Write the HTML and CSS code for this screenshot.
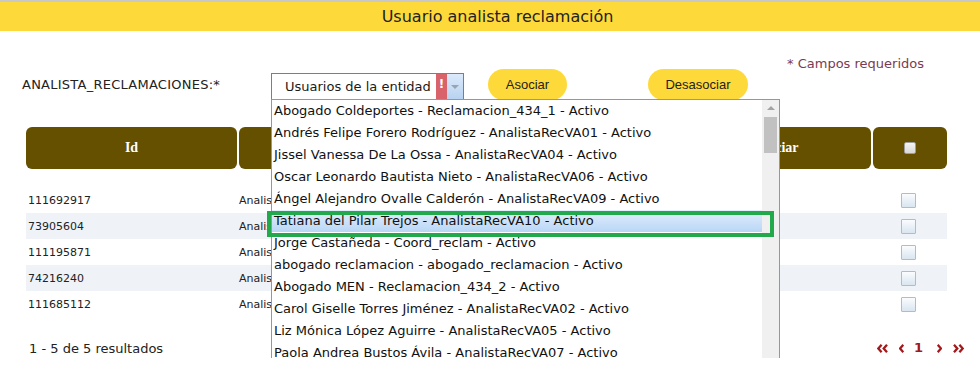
FILE: index.html
```html
<!DOCTYPE html>
<html lang="es">
<head>
<meta charset="utf-8">
<title>Usuario analista reclamación</title>
<link rel="stylesheet" href="styles.css">
</head>
<body>
<header class="topbar">
  <h1 class="title">Usuario analista reclamación</h1>
</header>

<main class="content">
  <div class="required">* Campos requeridos</div>

  <div class="form-row">
    <label class="field-label">ANALISTA_RECLAMACIONES:*</label>
    <div class="select-wrap">
      <div class="select">
        <span class="select-text">Usuarios de la entidad</span>
        <span class="select-error">!</span>
        <span class="select-arrow"><span class="tri-down"></span></span>
      </div>
      <div class="dropdown">
        <ul class="options">
          <li>Abogado Coldeportes - Reclamacion_434_1 - Activo</li>
          <li>Andrés Felipe Forero Rodríguez - AnalistaRecVA01 - Activo</li>
          <li>Jissel Vanessa De La Ossa - AnalistaRecVA04 - Activo</li>
          <li>Oscar Leonardo Bautista Nieto - AnalistaRecVA06 - Activo</li>
          <li>Ángel Alejandro Ovalle Calderón - AnalistaRecVA09 - Activo</li>
          <li class="selected">Tatiana del Pilar Trejos - AnalistaRecVA10 - Activo</li>
          <li>Jorge Castañeda - Coord_reclam - Activo</li>
          <li>abogado reclamacion - abogado_reclamacion - Activo</li>
          <li>Abogado MEN - Reclamacion_434_2 - Activo</li>
          <li>Carol Giselle Torres Jiménez - AnalistaRecVA02 - Activo</li>
          <li>Liz Mónica López Aguirre - AnalistaRecVA05 - Activo</li>
          <li>Paola Andrea Bustos Ávila - AnalistaRecVA07 - Activo</li>
        </ul>
        <div class="scrollbar">
          <span class="tri-up"></span>
          <span class="thumb"></span>
        </div>
      </div>
      <div class="mark-box"></div>
    </div>
    <button class="btn btn-asociar" type="button">Asociar</button>
    <button class="btn btn-desasociar" type="button">Desasociar</button>
  </div>

  <div class="table">
    <div class="thead">
      <div class="th">Id</div>
      <div class="th">Usuario</div>
      <div class="th">Nombre</div>
      <div class="th">Desasociar</div>
      <div class="th"><span class="head-check"></span></div>
    </div>
    <div class="tbody">
      <div class="tr">
        <div class="td">111692917</div>
        <div class="td">AnalistaRecVA01</div>
        <div class="td"></div>
        <div class="td"></div>
        <div class="td td-check"><span class="check"></span></div>
      </div>
      <div class="tr alt">
        <div class="td">73905604</div>
        <div class="td">AnalistaRecVA04</div>
        <div class="td"></div>
        <div class="td"></div>
        <div class="td td-check"><span class="check"></span></div>
      </div>
      <div class="tr">
        <div class="td">111195871</div>
        <div class="td">AnalistaRecVA06</div>
        <div class="td"></div>
        <div class="td"></div>
        <div class="td td-check"><span class="check"></span></div>
      </div>
      <div class="tr alt">
        <div class="td">74216240</div>
        <div class="td">AnalistaRecVA09</div>
        <div class="td"></div>
        <div class="td"></div>
        <div class="td td-check"><span class="check"></span></div>
      </div>
      <div class="tr">
        <div class="td">111685112</div>
        <div class="td">AnalistaRecVA02</div>
        <div class="td"></div>
        <div class="td"></div>
        <div class="td td-check"><span class="check"></span></div>
      </div>
    </div>
  </div>

  <div class="footer">
    <span class="results">1 - 5 de 5 resultados</span>
    <nav class="pager">
      <svg class="chev-double" width="11" height="9" viewBox="0 0 11 9"><polyline points="4.6,0.8 1.3,4.5 4.6,8.2"/><polyline points="10,0.8 6.7,4.5 10,8.2"/></svg>
      <svg class="chev-single prev" width="5" height="9" viewBox="0 0 5 9"><polyline points="4.3,0.8 1,4.5 4.3,8.2"/></svg>
      <span class="page-num">1</span>
      <svg class="chev-single next" width="5" height="9" viewBox="0 0 5 9"><polyline points="0.7,0.8 4,4.5 0.7,8.2"/></svg>
      <svg class="chev-double last" width="11" height="9" viewBox="0 0 11 9"><polyline points="1,0.8 4.3,4.5 1,8.2"/><polyline points="6.4,0.8 9.7,4.5 6.4,8.2"/></svg>
    </nav>
  </div>
</main>
</body>
</html>
```

FILE: styles.css
```css
html, body {
  margin: 0;
  padding: 0;
  overflow: hidden;
  background: #ffffff;
}

body {
  font-family: "DejaVu Sans", Verdana, sans-serif;
  font-size: 13px;
  color: #1f1f1f;
}

.topbar {
  border-top: 2px solid #c8c8c8;
  background: #fed93a;
  height: 29px;
}

.title {
  margin: 0;
  padding-left: 15px;
  font-size: 16px;
  font-weight: normal;
  line-height: 29px;
  text-align: center;
  color: #222;
}

.required {
  margin-top: 26px;
  padding-right: 56px;
  line-height: 14px;
  text-align: right;
  color: #7b3b50;
}

.form-row {
  display: flex;
  align-items: center;
  height: 31px;
  margin-top: -2px;
  padding-left: 22px;
}

.field-label {
  width: 249px;
  flex: none;
  line-height: 16px;
  letter-spacing: 0.25px;
  color: #222;
}

.select-wrap {
  position: relative;
  align-self: flex-start;
  margin-top: 4px;
  width: 193px;
  height: 27px;
  flex: none;
}

.select {
  box-sizing: border-box;
  display: flex;
  height: 27px;
  border: 1px solid #d9575b;
  background: #fff;
}

.select-text {
  flex: 1;
  padding-left: 13px;
  line-height: 25px;
  color: #1a1a1a;
  white-space: nowrap;
}

.select-error {
  width: 11px;
  background: #d9636a;
  color: #fff;
  font-weight: bold;
  font-size: 12px;
  line-height: 21px;
  text-align: center;
}

.select-arrow {
  width: 16px;
  display: flex;
  align-items: center;
  justify-content: center;
  background: linear-gradient(#dceafb, #b8d2f1);
}

.tri-down {
  width: 0;
  height: 0;
  border-left: 4px solid transparent;
  border-right: 4px solid transparent;
  border-top: 4px solid #9aa4ae;
}

.dropdown {
  position: absolute;
  z-index: 10;
  left: 0;
  top: 26px;
  box-sizing: border-box;
  width: 509px;
  height: 268px;
  border: 1px solid #7f9db9;
  background: #fff;
  display: flex;
  overflow: hidden;
}

.options {
  flex: 1;
  list-style: none;
  margin: 0;
  padding: 0;
}

.options li {
  height: 22px;
  line-height: 22px;
  padding-left: 2px;
  white-space: nowrap;
  color: #111;
}

.options li.selected {
  background: linear-gradient(#e3effc, #b9d6f6);
}

.scrollbar {
  width: 17px;
  flex: none;
  background: #f0f0f0;
  display: flex;
  flex-direction: column;
  align-items: center;
}

.tri-up {
  margin-top: 6px;
  width: 0;
  height: 0;
  border-left: 4px solid transparent;
  border-right: 4px solid transparent;
  border-bottom: 4px solid #a3a3a3;
}

.thumb {
  margin-top: 7px;
  width: 13px;
  height: 36px;
  background: #c1c1c1;
}

.mark-box {
  position: absolute;
  z-index: 11;
  left: -4px;
  top: 138px;
  box-sizing: border-box;
  width: 507px;
  height: 26px;
  border: 4px solid #22a94b;
}

.btn {
  flex: none;
  height: 31px;
  border: none;
  border-radius: 16px;
  background: #fed93a;
  font-family: "Liberation Sans", Arial, sans-serif;
  font-size: 13px;
  color: #222;
  padding: 0;
}

.btn-asociar {
  margin-left: 24px;
  width: 79px;
}

.btn-desasociar {
  margin-left: 81px;
  width: 100px;
}

.table {
  margin: 27px 33px 0 26px;
}

.thead {
  display: grid;
  grid-template-columns: 211px 1fr 1fr 1fr 74px;
  column-gap: 2px;
  height: 42px;
}

.th {
  background: #655000;
  border-radius: 6px;
  color: #fff;
  font-family: "Liberation Serif", "Times New Roman", serif;
  font-weight: bold;
  font-size: 14px;
  display: flex;
  align-items: center;
  justify-content: center;
}

.head-check {
  box-sizing: border-box;
  width: 12px;
  height: 12px;
  border: 1px solid #9d9d9d;
  border-radius: 2px;
  background: linear-gradient(#f4f4f4, #d9d9d9);
}

.tbody {
  margin-top: 18px;
}

.tr {
  display: grid;
  grid-template-columns: 211px 1fr 1fr 1fr 74px;
  height: 26px;
}

.tr.alt {
  background: #eff3f8;
}

.td {
  display: flex;
  align-items: center;
  padding-left: 2px;
  font-size: 11px;
  color: #222;
  white-space: nowrap;
  overflow: hidden;
}

.td-check {
  justify-content: center;
  padding-left: 0;
  padding-right: 3px;
}

.check {
  box-sizing: border-box;
  width: 15px;
  height: 15px;
  border: 1px solid #b7bbc1;
  border-radius: 1px;
  background: linear-gradient(#fbfcfe, #d9e5f0);
}

.footer {
  display: flex;
  align-items: center;
  justify-content: space-between;
  height: 20px;
  margin-top: 21px;
  padding: 0 16px 0 29px;
}

.results {
  color: #222;
}

.pager {
  display: flex;
  align-items: center;
}

.pager svg polyline {
  fill: none;
  stroke: #a3181a;
  stroke-width: 2.3;
}

.pager .prev {
  margin-left: 11px;
}

.page-num {
  margin-left: 10px;
  font-weight: bold;
  font-size: 13px;
  color: #a3181a;
  line-height: 20px;
}

.pager .next {
  margin-left: 14px;
}

.pager .last {
  margin-left: 11px;
}
```
